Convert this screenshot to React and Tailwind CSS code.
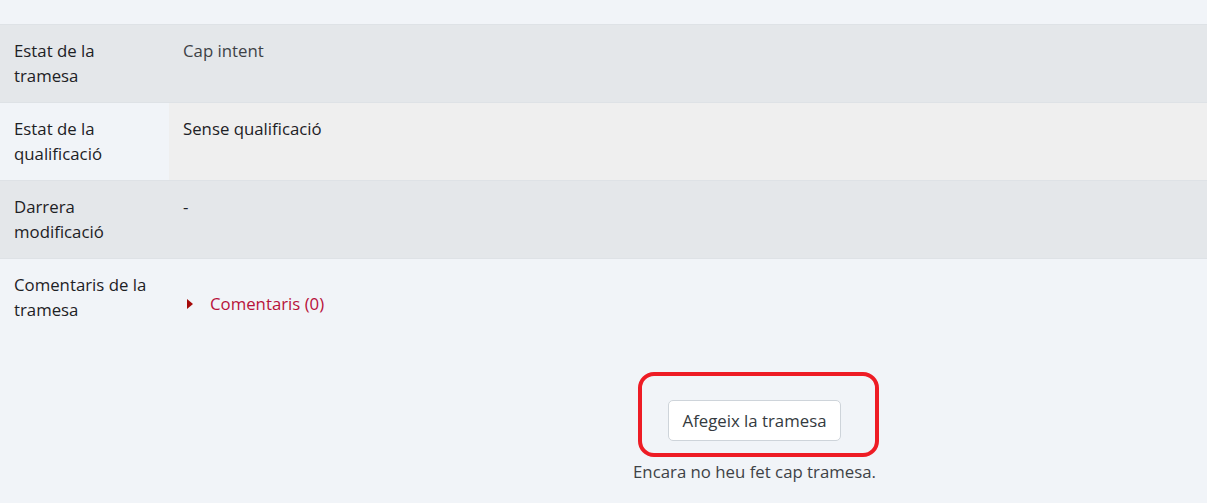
import React from "react";

const rows = [
  { label: ["Estat de la", "tramesa"], striped: true, value: <span className="text-[#3e4246]">Cap intent</span> },
  { label: ["Estat de la", "qualificació"], value: "Sense qualificació", valueBg: "bg-[#efefef]" },
  { label: ["Darrera", "modificació"], striped: true, value: "-" },
];

function Row({ label, value, striped, valueBg }) {
  return (
    <div className={`grid grid-cols-[169px_1fr] border-t border-[#dee2e6] ${striped ? "bg-[#e4e7ea]" : ""}`}>
      <div className="pl-[14px] pr-2 pt-[13px] pb-[14px]">
        {label.map((l) => (
          <div key={l}>{l}</div>
        ))}
      </div>
      <div className={`pl-[14px] pt-[13px] pb-[14px] ${valueBg || ""}`}>{value}</div>
    </div>
  );
}

export default function App() {
  return (
    <div className="min-h-screen bg-[#f1f4f8] font-['Open_Sans',sans-serif] text-[16.8px] leading-[25px] text-[#1d2125]">
      <div className="h-[24px]" />

      {rows.map((r) => (
        <Row key={r.label.join(" ")} {...r} />
      ))}

      {/* comments row */}
      <div className="grid grid-cols-[169px_1fr] border-t border-[#dee2e6]">
        <div className="pl-[14px] pr-2 pt-[13px] pb-[14px]">
          <div>Comentaris de la</div>
          <div>tramesa</div>
        </div>
        <div className="pl-[14px] pt-[32px]">
          <a href="#" className="flex items-center text-[#b8123a]">
            <svg width="6" height="10" viewBox="0 0 6 10" className="ml-[4px] mr-[17px]">
              <path d="M0 0 L6 5 L0 10 Z" fill="#a50a0a" />
            </svg>
            Comentaris (0)
          </a>
        </div>
      </div>

      <div className="pl-[302px] pt-[64px] flex flex-col items-center">
        <div className="relative">
          <button className="bg-white border border-[#ced4da] rounded-[5px] px-[14px] py-[7px] text-[#343a40]">
            Afegeix la tramesa
          </button>
          <div className="absolute left-[-30px] top-[-28px] w-[241px] h-[85px] border-4 border-[#ee1c25] rounded-[16px] pointer-events-none" />
        </div>
        <div className="mt-[18px] text-[#3e4246]">Encara no heu fet cap tramesa.</div>
      </div>
    </div>
  );
}
